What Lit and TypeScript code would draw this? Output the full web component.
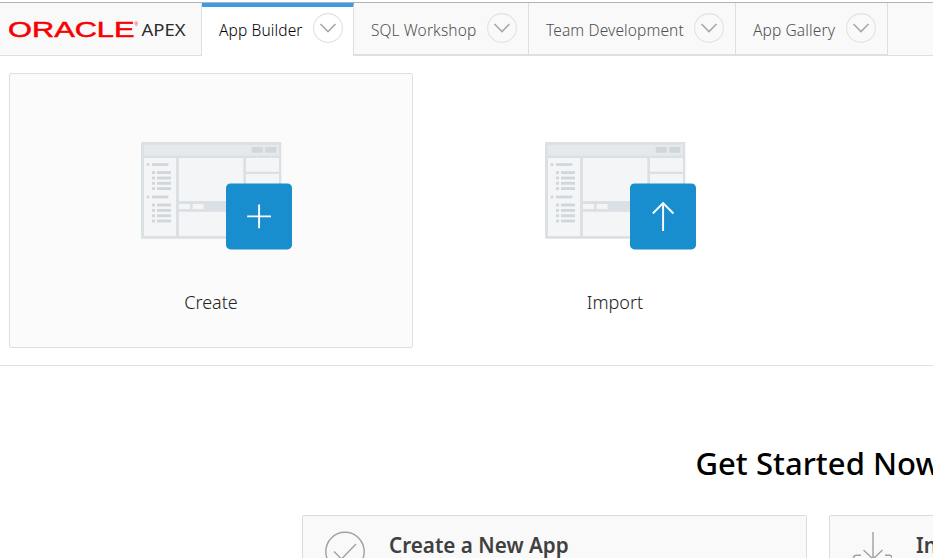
import { LitElement, html, svg, css } from "lit";
import { customElement, property } from "lit/decorators.js";

const chevron = html`<svg class="chev" viewBox="0 0 30 30" width="30" height="30">
  <circle cx="15" cy="15" r="14.4" fill="none" stroke="#e2e2e2" stroke-width="1.1" />
  <path d="M7.5 11 L15 18.6 L22.5 11" fill="none" stroke="#a6a6a6" stroke-width="1.5" />
</svg>`;

@customElement("nav-tab")
class NavTab extends LitElement {
  @property() label = "";
  static styles = css`
    :host {
      display: flex;
      box-sizing: border-box;
      align-items: flex-start;
      justify-content: space-between;
      height: 53px;
      padding: 10px 11px 0 17px;
      border-right: 1px solid #dfdfdf;
      border-bottom: 2px solid #dfdfdf;
      color: #505050;
      white-space: nowrap;
    }
    :host([active]) {
      padding-top: 6px;
      padding-right: 10px;
      border-top: 4px solid #3a9bea;
      border-bottom: 0;
      background: #fff;
      color: #000;
    }
    .label {
      font-size: 15.5px;
      line-height: 22px;
      margin-top: 6px;
      letter-spacing: 0.12px;
      font-weight: 350;
    }
    .chev {
      display: block;
    }
  `;
  render() {
    return html`<span class="label">${this.label}</span>${chevron}`;
  }
}

@customElement("page-picture")
class PagePicture extends LitElement {
  @property() glyph = "plus";
  static styles = css`
    :host {
      display: block;
      height: 108px;
    }
    svg {
      display: block;
    }
  `;
  render() {
    const group = (top: number) => svg`
      <rect x="5.7" y=${top} width="2.6" height="2.7" />
      <rect x="11" y=${top} width="16.4" height="2.7" />
      ${[8, 13.4, 18.7, 24].map(
        (d) => svg`<rect x="11" y=${top + d} width="3" height="2.8" /><rect x="16" y=${top + d} width="14" height="2.8" />`
      )}`;
    return html`<svg width="152" height="108" viewBox="0 0 152 108">
      <rect width="140.3" height="96.8" rx="1" fill="#dbe0e4" />
      <rect x="2.7" y="2.7" width="135.3" height="10.8" fill="#e5e9ec" />
      <g fill="#f3f5f7">
        <rect x="3" y="16" width="32" height="78" />
        <rect x="38" y="16" width="64.3" height="43" />
        <rect x="105" y="16" width="33" height="13.7" />
        <rect x="105" y="32" width="33" height="27" />
        <rect x="38" y="69.8" width="100" height="24.2" />
        <rect x="38" y="62" width="11" height="5" />
        <rect x="51.7" y="62" width="10.8" height="5" />
      </g>
      <g fill="#cfd6dc">
        <rect x="110.8" y="5" width="11" height="5.7" />
        <rect x="124.2" y="5" width="11" height="5.7" />
        ${group(21.2)} ${group(53.6)}
      </g>
      <rect x="85" y="41.4" width="66" height="66" rx="4.5" fill="#198ecf" />
      ${this.glyph === "plus"
        ? svg`<path d="M106.2 74.4H130M118.1 62.5V86.3" fill="none" stroke="#fff" stroke-width="1.9" />`
        : svg`<path d="M118.1 89V61.2M107.8 71.5L118.1 61.2L128.4 71.5" fill="none" stroke="#fff" stroke-width="1.9" />`}
    </svg>`;
  }
}

@customElement("app-root")
class AppRoot extends LitElement {
  static styles = css`
    :host {
      display: block;
      height: 558px;
      overflow: hidden;
      background: #fff;
      font-family: "Noto Sans", "Open Sans", sans-serif;
    }
    .page {
      width: 1636px;
      padding-top: 2px;
    }
    header {
      display: flex;
      box-sizing: border-box;
      height: 54px;
      border-top: 1px solid #b4b4b4;
      background: linear-gradient(#dfdfdf, #dfdfdf) bottom / 100% 1px no-repeat #f9f9f9;
    }
    .brand {
      box-sizing: border-box;
      width: 202px;
      height: 53px;
      padding: 14px 0 0 9px;
      border-right: 1px solid #dfdfdf;
    }
    .brand svg {
      display: block;
    }
    .oracle {
      font: 400 21.6px "Liberation Sans", sans-serif;
      fill: #f80000;
      stroke: #f80000;
      stroke-width: 0.5px;
    }
    .reg {
      font: 5px "Liberation Sans", sans-serif;
      fill: #f80000;
    }
    .apex {
      font: 16.8px "Noto Sans", sans-serif;
      fill: #2b2b2b;
    }
    .builder,
    .gallery {
      width: 152px;
    }
    .workshop {
      width: 175px;
    }
    .team {
      width: 207px;
    }
    .actions {
      display: flex;
      box-sizing: border-box;
      height: 310px;
      padding: 17px 9px;
      border-bottom: 1px solid #e0e0e0;
    }
    .action {
      box-sizing: border-box;
      width: 404px;
      height: 275px;
      padding-top: 68px;
      border: 1px solid transparent;
      border-radius: 2px;
      text-align: center;
      font-size: 18px;
      font-weight: 350;
      line-height: 26px;
      color: #222;
    }
    .action.hover {
      border-color: #dfdfdf;
      background: #fbfbfb;
    }
    page-picture {
      width: 152px;
      margin: 0 0 39px 131px;
    }
    h1 {
      margin: 0;
      padding-top: 74px;
      text-align: center;
      font-size: 31px;
      line-height: 46px;
      font-weight: 500;
      letter-spacing: 0.05px;
      color: #000;
    }
    .cards {
      display: flex;
      gap: 22px;
      padding: 29px 0 0 302px;
    }
    .card {
      display: flex;
      box-sizing: border-box;
      width: 505px;
      height: 120px;
      padding: 15px 22px;
      gap: 24px;
      border: 1px solid #dcdcdc;
      border-radius: 2px;
      background: #f9f9f9;
    }
    .card svg {
      flex: none;
    }
    h2 {
      margin: 0;
      font-size: 20.7px;
      line-height: 28px;
      font-weight: 560;
      letter-spacing: 0;
      color: #404040;
    }
  `;
  render() {
    return html`<div class="page">
      <header>
        <div class="brand">
          <svg width="185" height="26" viewBox="0 0 185 26">
            <text class="oracle" x="-1" y="20" textLength="126.5" lengthAdjust="spacingAndGlyphs">ORACLE</text>
            <text class="reg" x="125.5" y="8.5">®</text>
            <text class="apex" x="132.5" y="19" textLength="44" lengthAdjust="spacingAndGlyphs">APEX</text>
          </svg>
        </div>
        <nav-tab class="builder" active label="App Builder"></nav-tab>
        <nav-tab class="workshop" label="SQL Workshop"></nav-tab>
        <nav-tab class="team" label="Team Development"></nav-tab>
        <nav-tab class="gallery" label="App Gallery"></nav-tab>
      </header>
      <section class="actions">
        <div class="action hover"><page-picture glyph="plus"></page-picture>Create</div>
        <div class="action"><page-picture glyph="arrow"></page-picture>Import</div>
      </section>
      <h1>Get Started Now</h1>
      <section class="cards">
        <div class="card">
          <svg width="40" height="40" viewBox="0 0 40 40" fill="none" stroke="#a0a0a0" stroke-width="1.4">
            <circle cx="20" cy="20.5" r="19.2" />
            <path d="M9 20.5L16.5 28L31 13" />
          </svg>
          <h2>Create a New App</h2>
        </div>
        <div class="card">
          <svg width="40" height="40" viewBox="0 0 40 40" fill="none" stroke="#a0a0a0" stroke-width="1.4">
            <path d="M21 1V28M11.5 19L21 28L30.5 19" />
            <path d="M9 24.2H4.5Q1.5 24.2 1.5 27V37H40V27Q40 24.2 37.5 24.2H33" />
          </svg>
          <h2>Install</h2>
        </div>
      </section>
    </div>`;
  }
}
